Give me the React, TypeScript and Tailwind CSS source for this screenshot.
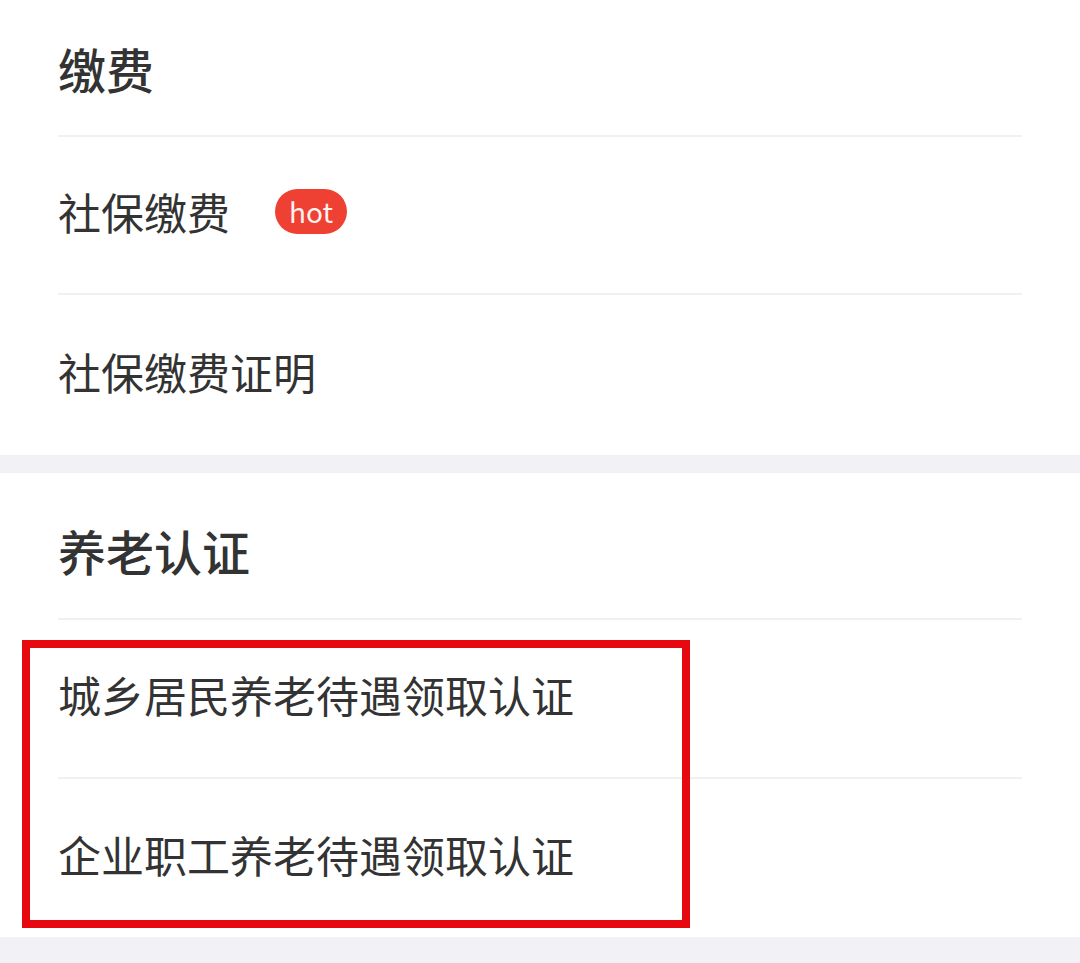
import { FC, ReactNode } from 'react';

const Divider: FC = () => <div className="mx-[58px] h-[2px] bg-[#f0f0f0]" />;

const Row: FC<{ label: string; height: string; badge?: ReactNode }> = ({ label, height, badge }) => (
  <div className={`flex items-center px-[58px] pb-[8px] ${height}`}>
    <span className="text-[43px] leading-none text-[#333333]">{label}</span>
    {badge}
  </div>
);

const HotBadge: FC = () => (
  <span className="ml-[45px] flex h-[45px] w-[72px] items-center justify-center rounded-full bg-[#ef4034] text-[28px] leading-none text-[#fff2ef]">
    hot
  </span>
);

const App: FC = () => {
  return (
    <div
      className="flex h-[963px] w-[1080px] flex-col overflow-hidden bg-[#f2f2f6]"
      style={{ fontFamily: '"Noto Sans CJK SC", "Noto Sans", sans-serif' }}
    >
      <section className="bg-white">
        <div className="flex h-[135px] items-center px-[58px]">
          <h2 className="text-[48px] font-medium leading-none text-[#333333]">缴费</h2>
        </div>
        <Divider />
        <Row label="社保缴费" height="h-[156px]" badge={<HotBadge />} />
        <Divider />
        <Row label="社保缴费证明" height="h-[160px]" />
      </section>

      <section className="mt-[18px] bg-white">
        <div className="flex h-[145px] items-center px-[58px] pt-2">
          <h2 className="text-[48px] font-medium leading-none text-[#333333]">养老认证</h2>
        </div>
        <Divider />
        <div className="relative">
          <Row label="城乡居民养老待遇领取认证" height="h-[157px]" />
          <Divider />
          <Row label="企业职工养老待遇领取认证" height="h-[158px]" />
          <div className="pointer-events-none absolute left-[22px] top-[20px] h-[288px] w-[668px] border-[8px] border-[#e60a10]" />
        </div>
      </section>
    </div>
  );
};

export default App;
